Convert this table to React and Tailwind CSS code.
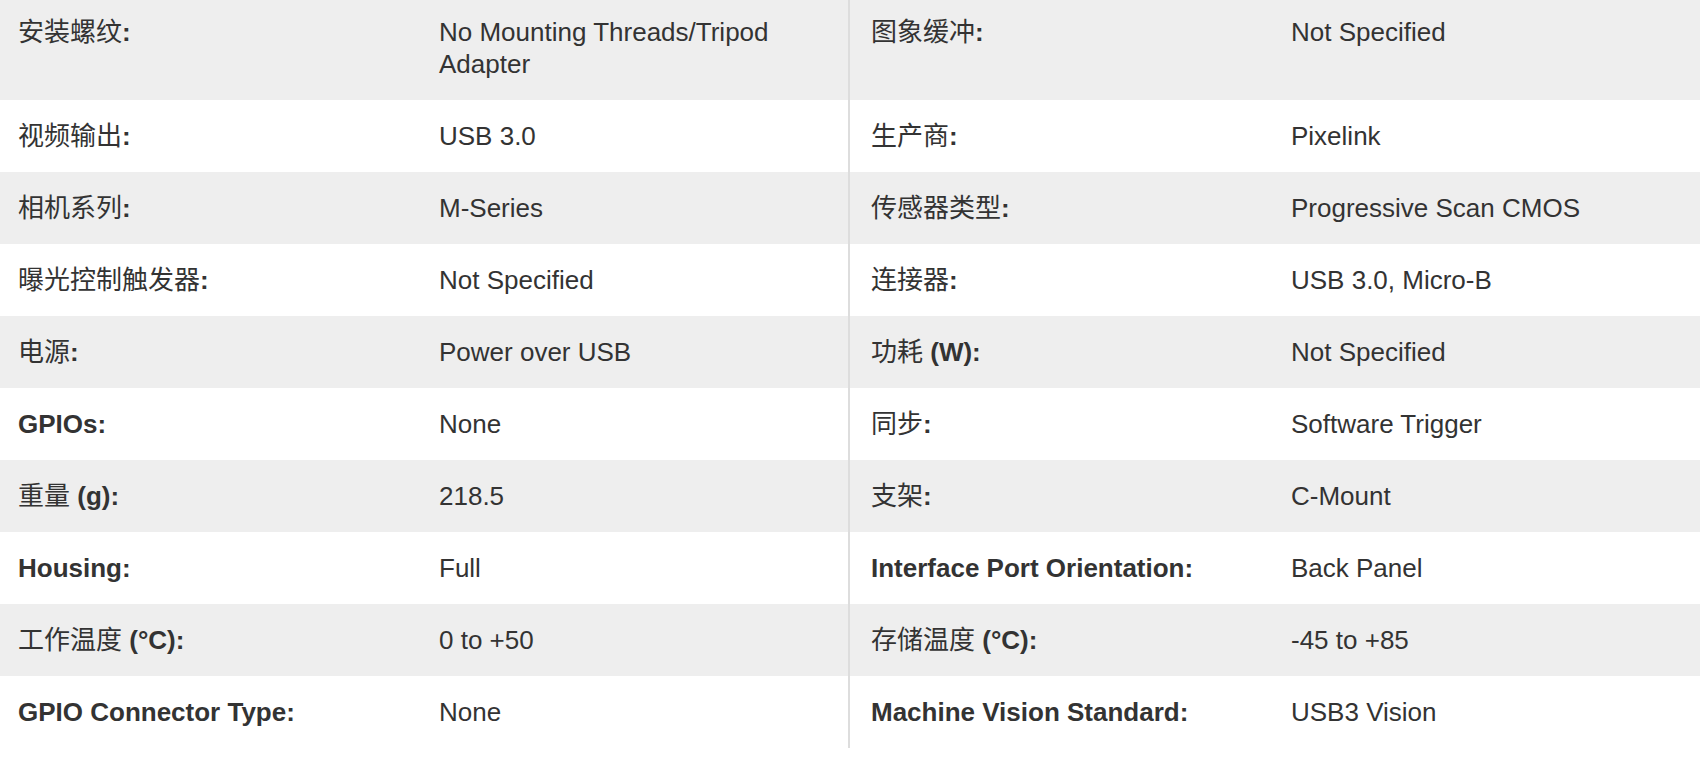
import React from 'react';

const specs = [
  ['安装螺纹:', 'No Mounting Threads/Tripod Adapter', '图象缓冲:', 'Not Specified'],
  ['视频输出:', 'USB 3.0', '生产商:', 'Pixelink'],
  ['相机系列:', 'M-Series', '传感器类型:', 'Progressive Scan CMOS'],
  ['曝光控制触发器:', 'Not Specified', '连接器:', 'USB 3.0, Micro-B'],
  ['电源:', 'Power over USB', '功耗 (W):', 'Not Specified'],
  ['GPIOs:', 'None', '同步:', 'Software Trigger'],
  ['重量 (g):', '218.5', '支架:', 'C-Mount'],
  ['Housing:', 'Full', 'Interface Port Orientation:', 'Back Panel'],
  ['工作温度 (°C):', '0 to +50', '存储温度 (°C):', '-45 to +85'],
  ['GPIO Connector Type:', 'None', 'Machine Vision Standard:', 'USB3 Vision'],
];

// CJK glyphs show up regular weight in the original, only latin parts are bold
const Label = ({ text }) => (
  <>
    {text.split(/([\u4e00-\u9fff]+)/).map((part, i) =>
      /[\u4e00-\u9fff]/.test(part) ? (
        <span key={i} className="font-normal">{part}</span>
      ) : (
        <span key={i}>{part}</span>
      )
    )}
  </>
);

export default function App() {
  return (
    <div className="min-h-screen bg-white font-['Liberation_Sans','Noto_Sans_CJK_SC',sans-serif] text-[26px] leading-[32px] text-[#333333]">
      <div className="w-[1700px]">
        {specs.map(([l1, v1, l2, v2], i) => {
          const pad = i === 0 ? 'pt-4 pb-5' : 'py-5';
          return (
            <div
              key={l1}
              className={`grid grid-cols-[421px_427px_425px_427px] ${i % 2 === 0 ? 'bg-[#eeeeee]' : 'bg-white'}`}
            >
              <div className={`font-bold pl-[18px] pr-4 ${pad}`}>
                <Label text={l1} />
              </div>
              <div className={`px-[18px] ${pad}`}>{v1}</div>
              <div className={`font-bold border-l-2 border-[#dddddd] pl-[21px] pr-4 ${pad}`}>
                <Label text={l2} />
              </div>
              <div className={`px-[18px] ${pad}`}>{v2}</div>
            </div>
          );
        })}
      </div>
    </div>
  );
}
